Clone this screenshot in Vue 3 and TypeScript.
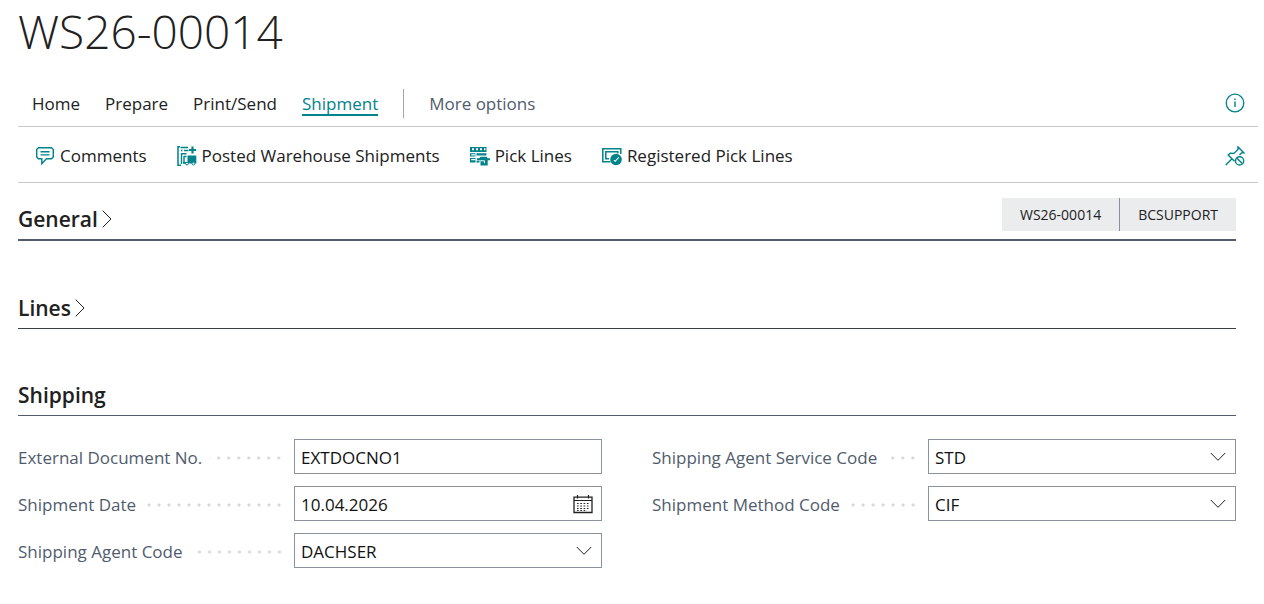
<script setup lang="ts">
import { ref } from 'vue'

type FieldKind = 'text' | 'date' | 'lookup'
interface Field {
  id: string
  label: string
  kind: FieldKind
  value: string
}

const documentNo = 'WS26-00014'
const tabs = ['Home', 'Prepare', 'Print/Send', 'Shipment']
const activeTab = ref('Shipment')
const summary = ['WS26-00014', 'BCSUPPORT']

const columns = ref<Field[][]>([
  [
    { id: 'external-document', label: 'External Document No.', kind: 'text', value: 'EXTDOCNO1' },
    { id: 'shipment-date', label: 'Shipment Date', kind: 'date', value: '10.04.2026' },
    { id: 'agent-code', label: 'Shipping Agent Code', kind: 'lookup', value: 'DACHSER' },
  ],
  [
    { id: 'service-code', label: 'Shipping Agent Service Code', kind: 'lookup', value: 'STD' },
    { id: 'method-code', label: 'Shipment Method Code', kind: 'lookup', value: 'CIF' },
  ],
])
</script>

<template>
  <main class="page">
    <h1 class="title">{{ documentNo }}</h1>

    <nav class="bar tabs" aria-label="Actions">
      <button
        v-for="tab in tabs"
        :key="tab"
        type="button"
        class="tab"
        :class="{ active: tab === activeTab }"
        @click="activeTab = tab"
      >
        {{ tab }}
      </button>
      <span class="divider"></span>
      <button type="button" class="tab more">More options</button>
      <button type="button" class="icon-button" aria-label="Details">
        <svg class="icon" viewBox="0 0 20 20" fill="none" stroke="currentColor">
          <circle cx="10" cy="10" r="8.8" stroke-width="1.3" />
          <path d="M10 8.5V14" stroke-width="1.4" />
          <path d="M10 5.4V7" stroke-width="1.4" />
        </svg>
      </button>
    </nav>

    <div class="bar actions">
      <button type="button" class="action">
        <svg class="icon" viewBox="0 0 20 20" fill="none" stroke="currentColor" stroke-width="1.4">
          <path d="M3.5 1.8H16.5L18.3 3.6V11L16.5 12.8H11.5L6.8 17.7V12.8H3.5L1.7 11V3.6Z" />
          <path d="M5.5 5.7H14.5M5.5 8.9H14.5" />
        </svg>
        Comments
      </button>
      <button type="button" class="action">
        <svg class="icon" viewBox="0 0 20 20" fill="none" stroke="currentColor">
          <path d="M3 .8H1V19.2H4M3.5 1.5H11M4 4.5H5.5M7 4.5H11.5" stroke-width="1.5" />
          <path d="M15.5 .5V7.5M12 4H19" stroke-width="2.2" />
          <path d="M4.5 18V7.8H9.5M7 10.5H9.5M7 10V17H10" stroke-width="1.4" />
          <path d="M10.5 9.5H19.3V17.5H6V16H10.5Z" fill="currentColor" stroke="none" />
          <circle cx="10" cy="17.6" r="1.4" fill="#fff" />
          <circle cx="16.5" cy="17.6" r="1.4" fill="#fff" />
        </svg>
        Posted Warehouse Shipments
      </button>
      <button type="button" class="action">
        <svg class="icon" viewBox="0 0 20 20" fill="currentColor">
          <path d="M0 1H16.5V6H0ZM0 7.2H5.5V10.5H0ZM6.5 7.2H16.5V9.5H6.5ZM0 12H5.5V16.5H0ZM6.5 14.8H9.5V16.5H6.5Z" />
          <path d="M2 2.3H4V4.3H2ZM6 2.3H8V4.3H6ZM10 2.3H12V4.3H10ZM14 2.3H15.5V4.3H14ZM1.2 8.3H5.5V9.5H1.2ZM1.2 13H5.5V14.2H1.2Z" fill="#fff" />
          <path d="M7 12.2H9.2L10.5 10.7H16.5L17.7 12.2H20V14.2H17.7V19.5H10.5V14.2H7Z" />
          <path d="M10.5 14.8H14.5V17.2" fill="none" stroke="#fff" />
        </svg>
        Pick Lines
      </button>
      <button type="button" class="action">
        <svg class="icon" viewBox="0 0 20 20" fill="none" stroke="currentColor">
          <path d="M8.5 15.8H.8V2.7H18.8V8" stroke-width="1.5" />
          <path d="M7 12.8H3.8V5.7H15.8V7.5" stroke-width="1.5" />
          <circle cx="14" cy="13.5" r="5.8" fill="currentColor" stroke="none" />
          <path d="M12 14.2L13.2 15.3L16.7 11.3" stroke="#fff" stroke-width="1.1" />
        </svg>
        Registered Pick Lines
      </button>
      <button type="button" class="icon-button" aria-label="Unpin actions">
        <svg class="icon" viewBox="0 0 20 20" fill="none" stroke="currentColor" stroke-width="1.4">
          <path d="M.8 19L7 12.8M9.5 15.2L3.2 9L5.2 7.2L9 7.4L13 3.4V.9L19 6.9H16.5L14.5 9" />
          <circle cx="14.6" cy="14.9" r="4.1" />
          <path d="M11.8 12L17.5 17.8" />
        </svg>
      </button>
    </div>

    <section class="section general">
      <h2>
        <button type="button" class="toggle" aria-expanded="false">
          General
          <svg class="chevron" viewBox="0 0 10 18" fill="none" stroke="currentColor">
            <path d="M.7 .7L9 9L.7 17.3" />
          </svg>
        </button>
      </h2>
      <div class="summary">
        <span v-for="item in summary" :key="item">{{ item }}</span>
      </div>
    </section>

    <section class="section">
      <h2>
        <button type="button" class="toggle" aria-expanded="false">
          Lines
          <svg class="chevron" viewBox="0 0 10 18" fill="none" stroke="currentColor">
            <path d="M.7 .7L9 9L.7 17.3" />
          </svg>
        </button>
      </h2>
    </section>

    <section class="section shipping">
      <h2><button type="button" class="toggle" aria-expanded="true">Shipping</button></h2>
    </section>

    <form class="fields" @submit.prevent>
      <div v-for="(column, index) in columns" :key="index" class="column">
        <div v-for="field in column" :key="field.id" class="field">
          <div class="caption">
            <label :for="field.id">{{ field.label }}</label>
            <span class="dots"></span>
          </div>
          <div class="control">
            <select v-if="field.kind === 'lookup'" :id="field.id" v-model="field.value">
              <option>{{ field.value }}</option>
            </select>
            <input v-else :id="field.id" v-model="field.value" type="text" />
            <svg v-if="field.kind === 'lookup'" class="arrow" viewBox="0 0 16 10" fill="none" stroke="currentColor">
              <path d="M.8 1L8 8.3L15.2 1" />
            </svg>
            <button v-if="field.kind === 'date'" type="button" class="calendar" aria-label="Choose a date">
              <svg viewBox="0 0 20 20" fill="none" stroke="currentColor">
                <path d="M1 3.2H19V18.5H1Z" stroke-width="1.3" />
                <path d="M1 6.5H19M4.5 1V4.5M15.5 1V4.5" stroke-width="1.2" />
                <path d="M4 9.5H17M4 12H17M4 14.5H17M4 16.5H14" stroke-width="1.1" stroke-dasharray="1.6 1.7" />
              </svg>
            </button>
          </div>
        </div>
      </div>
    </form>
  </main>
</template>

<style>
body {
  margin: 0;
  background: #fff;
}
</style>

<style scoped>
.page {
  padding: 0 6px 36px 18px;
  color: #212121;
  font: 17px/24px "Open Sans", "Noto Sans", sans-serif;
}

button {
  padding: 0;
  border: 0;
  background: none;
  color: inherit;
  font: inherit;
  white-space: nowrap;
  cursor: pointer;
}

.title {
  margin: 0;
  font-size: 46px;
  font-weight: 300;
  line-height: 63px;
}

.bar {
  display: flex;
  align-items: center;
  box-sizing: border-box;
  border-bottom: 1px solid #c8c9cf;
}

.tabs {
  gap: 25px;
  height: 47px;
  margin-top: 17px;
  padding: 0 13px 0 14px;
}

.tab {
  padding-top: 4px;
  border-bottom: 2px solid transparent;
  line-height: 20px;
}

.tab.active {
  border-color: #00838a;
  color: #00838a;
}

.tab.more {
  color: #505c6d;
}

.divider {
  width: 1px;
  height: 29px;
  background: #a0a6b2;
}

.icon-button {
  display: flex;
  margin-left: auto;
  color: #00838a;
}

.icon {
  flex: none;
  width: 20px;
  height: 20px;
  color: #00838a;
}

.actions {
  gap: 30px;
  height: 56px;
  padding: 2px 13px 0 17px;
}

.action {
  display: flex;
  align-items: center;
  gap: 5px;
}

.section {
  display: flex;
  align-items: center;
  justify-content: space-between;
  box-sizing: border-box;
  height: 47px;
  margin: 41px 22px 0 0;
  border-bottom: 1px solid #3b3f48;
}

.general {
  height: 49px;
  margin-top: 9px;
  border-bottom: 2px solid #505c6d;
}

.shipping {
  margin-top: 40px;
  border-color: #505c6d;
}

h2 {
  margin: 0;
  padding-top: 6px;
  font-size: 21px;
  font-weight: 600;
  line-height: 28px;
}

.toggle {
  display: flex;
  align-items: center;
  gap: 4px;
}

.chevron {
  width: 10px;
  height: 18px;
}

.summary {
  display: flex;
  margin-bottom: 2px;
  font-size: 14px;
  line-height: 33px;
}

.summary span {
  padding: 0 18px;
  background: #ebecee;
}

.summary span + span {
  border-left: 1px solid #8a8f99;
}

.fields {
  display: grid;
  grid-template-columns: 1fr 1fr;
  gap: 50px;
  margin: 23px 22px 0 0;
}

.column {
  display: flex;
  flex-direction: column;
  gap: 12px;
}

.field {
  display: grid;
  grid-template-columns: 276fr 308fr;
}

.caption {
  display: flex;
  align-items: center;
  gap: 8px;
  padding: 2px 10px 0 0;
  color: #505c6d;
  white-space: nowrap;
}

.dots {
  flex: 1;
  height: 4px;
  background: radial-gradient(circle at center, #d4d6da 1px, transparent 2px) right center / 10px 4px repeat-x;
}

.control {
  position: relative;
  color: #212121;
}

.control input,
.control select {
  display: block;
  box-sizing: border-box;
  width: 100%;
  height: 35px;
  margin: 0;
  padding: 2px 6px 0;
  border: 1px solid #8a92a0;
  border-radius: 0;
  background: #fff;
  color: #111;
  font: inherit;
  appearance: none;
}

.arrow {
  position: absolute;
  top: 13px;
  right: 10px;
  width: 16px;
  height: 10px;
  pointer-events: none;
}

.calendar {
  position: absolute;
  top: 8px;
  right: 9px;
  display: flex;
}

.calendar svg {
  width: 20px;
  height: 20px;
}
</style>
